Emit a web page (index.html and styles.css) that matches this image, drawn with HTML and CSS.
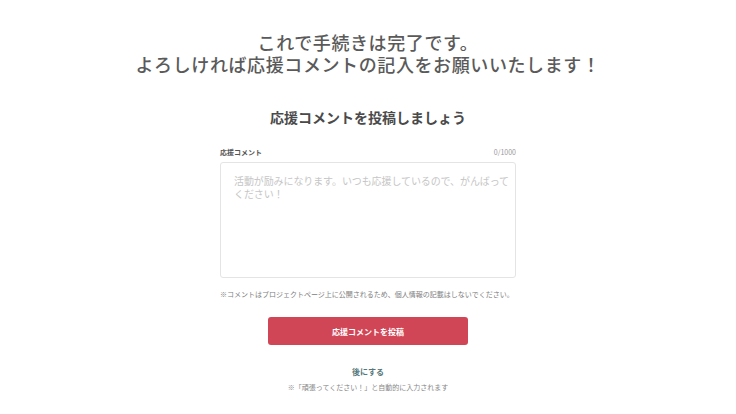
FILE: index.html
```html
<!DOCTYPE html>
<html lang="ja">
<head>
    <meta charset="UTF-8">
    <meta name="viewport" content="width=device-width, initial-scale=1.0">
    <title>応援コメント</title>
    <link rel="stylesheet" href="styles.css">
</head>
<body>

<div class="page">
    <!-- 完了メッセージ -->
    <h1 class="done-title">
        <span>これで手続きは完了です。</span>
        <span>よろしければ応援コメントの記入をお願いいたします！</span>
    </h1>

    <h2 class="comment-title">応援コメントを投稿しましょう</h2>

    <!-- コメント入力 -->
    <form class="comment-form">
        <div class="field-head">
            <label for="comment">応援コメント</label>
            <span class="counter">0/1000</span>
        </div>
        <textarea id="comment" placeholder="活動が励みになります。いつも応援しているので、がんばってください！"></textarea>
        <p class="note">※コメントはプロジェクトページ上に公開されるため、個人情報の記載はしないでください。</p>

        <button type="button" class="submit-btn">応援コメントを投稿</button>

        <a href="#" class="later-link">後にする</a>
        <p class="later-note">※「頑張ってください！」と自動的に入力されます</p>
    </form>
</div>

</body>
</html>
```

FILE: styles.css
```css
body {
    margin: 0;
    background: #fff;
    font-family: "Noto Sans CJK JP", "Noto Sans", sans-serif;
    color: #555;
}

.page {
    display: flex;
    flex-direction: column;
    align-items: center;
    padding-top: 31px;
}

.done-title {
    margin: 0;
    display: flex;
    flex-direction: column;
    align-items: center;
    font-size: 18px;
    line-height: 22px;
    font-weight: 500;
    letter-spacing: 0.6px;
    text-align: center;
    color: #5a5a5a;
}

.comment-title {
    margin: 32px 0 0;
    font-size: 14px;
    line-height: 20px;
    font-weight: bold;
    color: #4a4a4a;
}

.comment-form {
    width: 296px;
    margin-top: 20px;
    display: flex;
    flex-direction: column;
    align-items: center;
}

.field-head {
    width: 100%;
    display: flex;
    justify-content: space-between;
    align-items: center;
    font-size: 7px;
    line-height: 10px;
}

.field-head label {
    font-weight: bold;
    color: #555;
}

.counter {
    color: #999;
}

textarea {
    box-sizing: border-box;
    width: 100%;
    height: 116px;
    margin-top: 5px;
    padding: 11px 2px 11px 13px;
    border: 1px solid #e4e4e4;
    border-radius: 3px;
    font-family: inherit;
    font-size: 10px;
    line-height: 13px;
    letter-spacing: -0.1px;
    resize: none;
    color: #333;
}

textarea::placeholder {
    color: #c6c6c6;
}

.note {
    width: 100%;
    margin: 11px 0 0;
    font-size: 7px;
    line-height: 10px;
    color: #808080;
}

.submit-btn {
    width: 200px;
    height: 28px;
    margin-top: 18px;
    border: none;
    border-radius: 3px;
    background-color: #d14656;
    color: #fff;
    font-family: inherit;
    font-size: 8px;
    font-weight: bold;
    cursor: pointer;
}

.later-link {
    margin-top: 21px;
    font-size: 8px;
    line-height: 12px;
    font-weight: bold;
    color: #55777a;
    text-decoration: none;
}

.later-note {
    margin: 4px 0 0;
    font-size: 7px;
    line-height: 10px;
    color: #888;
}
```
